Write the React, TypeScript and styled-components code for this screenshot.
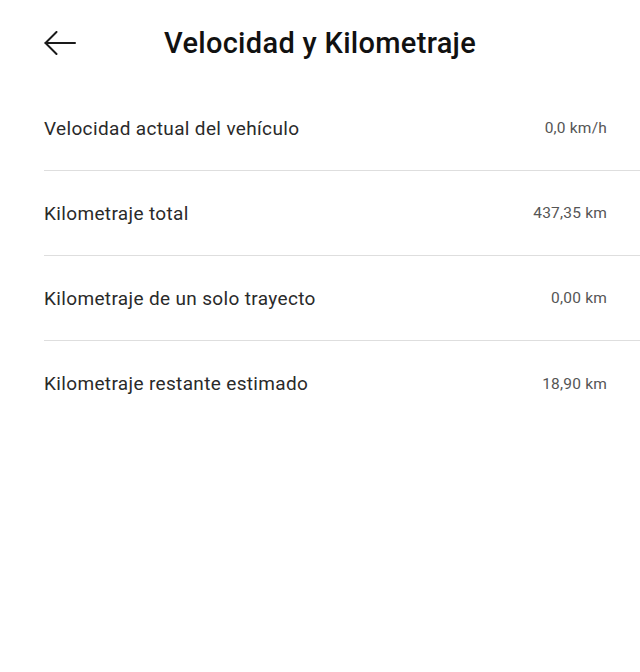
import React from 'react';
import styled, { createGlobalStyle } from 'styled-components';

const GlobalStyle = createGlobalStyle`
  html, body {
    margin: 0;
    padding: 0;
    background: #ffffff;
  }
  body {
    font-family: Roboto, "Liberation Sans", sans-serif;
    -webkit-font-smoothing: antialiased;
  }
`;

const Page = styled.div`
  width: 640px;
  min-height: 672px;
  background: #ffffff;
  display: flex;
  flex-direction: column;
`;

const Header = styled.header`
  height: 86px;
  display: flex;
  align-items: center;
  padding: 0 44px;
  box-sizing: border-box;
  gap: 88px;
`;

const BackButton = styled.button`
  background: none;
  border: none;
  padding: 0;
  margin: 0;
  cursor: pointer;
  display: flex;
  align-items: center;
  color: #1a1a1a;

  svg {
    width: 32px;
    height: 24px;
  }
`;

const Title = styled.h1`
  margin: 0;
  font-size: 29px;
  font-weight: 500;
  color: #111111;
  letter-spacing: 0.3px;
`;

const List = styled.div`
  display: flex;
  flex-direction: column;
  padding-left: 44px;
`;

const Row = styled.div<{ $last?: boolean }>`
  height: 85px;
  display: flex;
  align-items: center;
  justify-content: space-between;
  padding-right: 33px;
  box-sizing: border-box;
  border-bottom: ${(p) => (p.$last ? 'none' : '1.5px solid #dedede')};
`;

const Label = styled.span`
  font-size: 19px;
  font-weight: 400;
  color: #2a2a2a;
  letter-spacing: 0.35px;
`;

const Value = styled.span`
  font-size: 15.5px;
  font-weight: 400;
  color: #555555;
  letter-spacing: 0.2px;
`;

const rows = [
  { label: 'Velocidad actual del vehículo', value: '0,0 km/h' },
  { label: 'Kilometraje total', value: '437,35 km' },
  { label: 'Kilometraje de un solo trayecto', value: '0,00 km' },
  { label: 'Kilometraje restante estimado', value: '18,90 km' },
];

const App: React.FC = () => {
  return (
    <Page>
      <GlobalStyle />
      <Header>
        <BackButton aria-label="Volver">
          <svg viewBox="0 0 32 24" fill="none" stroke="currentColor" strokeWidth="2" strokeLinecap="round" strokeLinejoin="round">
            <path d="M31 12H1.5" />
            <path d="M12.5 1L1.5 12l11 11" />
          </svg>
        </BackButton>
        <Title>Velocidad y Kilometraje</Title>
      </Header>
      <List>
        {rows.map((r, i) => (
          <Row key={r.label} $last={i === rows.length - 1}>
            <Label>{r.label}</Label>
            <Value>{r.value}</Value>
          </Row>
        ))}
      </List>
    </Page>
  );
};

export default App;
